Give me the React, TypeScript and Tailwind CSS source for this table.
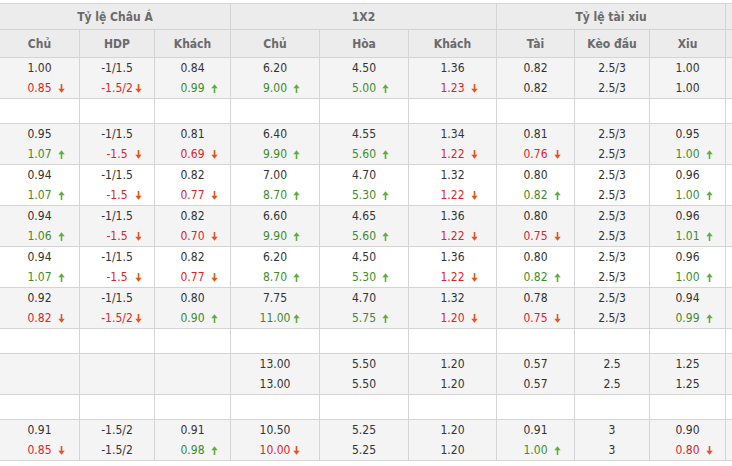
import React from "react";

type Cell = { v: string; d?: "up" | "down" } | null;
type Row = { blank?: boolean; gray?: boolean; cells?: [Cell, Cell][] };

const COLS = "grid grid-cols-[80px_75px_76px_89px_89px_88px_78px_75px_76px_1fr]";

function Arrow({ d }: { d: "up" | "down" }) {
  const color = d === "up" ? "#5eae3e" : "#e5531f";
  return (
    <svg width="7" height="9" viewBox="0 0 7 9" className={d === "down" ? "rotate-180" : ""}>
      <path d="M3.5 9V3" stroke={color} strokeWidth="1.6" />
      <polygon points="0.3,4.2 3.5,0.3 6.7,4.2" fill={color} />
    </svg>
  );
}

function Line({ c }: { c: Cell }) {
  if (!c) return <div className="h-5" />;
  const tone = c.d === "up" ? "text-[#3f8b2c]" : c.d === "down" ? "text-[#d8272c]" : "text-[#333]";
  return (
    <div className={`relative h-5 leading-5 w-full text-center ${tone}`}>
      {c.v}
      {c.d && (
        <span className="absolute left-[calc(50%+18px)] top-[6px] flex">
          <Arrow d={c.d} />
        </span>
      )}
    </div>
  );
}

const n = (v: string, d?: "up" | "down"): Cell => ({ v, d });

const rows: Row[] = [
  {
    gray: true,
    cells: [
      [n("1.00"), n("0.85", "down")],
      [n("-1/1.5"), n("-1.5/2", "down")],
      [n("0.84"), n("0.99", "up")],
      [n("6.20"), n("9.00", "up")],
      [n("4.50"), n("5.00", "up")],
      [n("1.36"), n("1.23", "down")],
      [n("0.82"), n("0.82")],
      [n("2.5/3"), n("2.5/3")],
      [n("1.00"), n("1.00")],
    ],
  },
  { blank: true },
  {
    gray: true,
    cells: [
      [n("0.95"), n("1.07", "up")],
      [n("-1/1.5"), n("-1.5", "down")],
      [n("0.81"), n("0.69", "down")],
      [n("6.40"), n("9.90", "up")],
      [n("4.55"), n("5.60", "up")],
      [n("1.34"), n("1.22", "down")],
      [n("0.81"), n("0.76", "down")],
      [n("2.5/3"), n("2.5/3")],
      [n("0.95"), n("1.00", "up")],
    ],
  },
  {
    cells: [
      [n("0.94"), n("1.07", "up")],
      [n("-1/1.5"), n("-1.5", "down")],
      [n("0.82"), n("0.77", "down")],
      [n("7.00"), n("8.70", "up")],
      [n("4.70"), n("5.30", "up")],
      [n("1.32"), n("1.22", "down")],
      [n("0.80"), n("0.82", "up")],
      [n("2.5/3"), n("2.5/3")],
      [n("0.96"), n("1.00", "up")],
    ],
  },
  {
    gray: true,
    cells: [
      [n("0.94"), n("1.06", "up")],
      [n("-1/1.5"), n("-1.5", "down")],
      [n("0.82"), n("0.70", "down")],
      [n("6.60"), n("9.90", "up")],
      [n("4.65"), n("5.60", "up")],
      [n("1.36"), n("1.22", "down")],
      [n("0.80"), n("0.75", "down")],
      [n("2.5/3"), n("2.5/3")],
      [n("0.96"), n("1.01", "up")],
    ],
  },
  {
    cells: [
      [n("0.94"), n("1.07", "up")],
      [n("-1/1.5"), n("-1.5", "down")],
      [n("0.82"), n("0.77", "down")],
      [n("6.20"), n("8.70", "up")],
      [n("4.50"), n("5.30", "up")],
      [n("1.36"), n("1.22", "down")],
      [n("0.80"), n("0.82", "up")],
      [n("2.5/3"), n("2.5/3")],
      [n("0.96"), n("1.00", "up")],
    ],
  },
  {
    gray: true,
    cells: [
      [n("0.92"), n("0.82", "down")],
      [n("-1/1.5"), n("-1.5/2", "down")],
      [n("0.80"), n("0.90", "up")],
      [n("7.75"), n("11.00", "up")],
      [n("4.70"), n("5.75", "up")],
      [n("1.32"), n("1.20", "down")],
      [n("0.78"), n("0.75", "down")],
      [n("2.5/3"), n("2.5/3")],
      [n("0.94"), n("0.99", "up")],
    ],
  },
  { blank: true },
  {
    gray: true,
    cells: [
      [null, null],
      [null, null],
      [null, null],
      [n("13.00"), n("13.00")],
      [n("5.50"), n("5.50")],
      [n("1.20"), n("1.20")],
      [n("0.57"), n("0.57")],
      [n("2.5"), n("2.5")],
      [n("1.25"), n("1.25")],
    ],
  },
  { blank: true },
  {
    gray: true,
    cells: [
      [n("0.91"), n("0.85", "down")],
      [n("-1.5/2"), n("-1.5/2")],
      [n("0.91"), n("0.98", "up")],
      [n("10.50"), n("10.00", "down")],
      [n("5.25"), n("5.25")],
      [n("1.20"), n("1.20")],
      [n("0.91"), n("1.00", "up")],
      [n("3"), n("3")],
      [n("0.90"), n("0.80", "down")],
    ],
  },
];

const subHeads = ["Chủ", "HDP", "Khách", "Chủ", "Hòa", "Khách", "Tài", "Kèo đầu", "Xiu"];

export default function App() {
  return (
    <div className="w-[732px] h-[466px] overflow-hidden bg-white pt-[3px] text-[12px] font-['DejaVu_Sans_Condensed','DejaVu_Sans',sans-serif]">
      <div className="border-t border-[#d4d4d4]">
        {/* top header */}
        <div className={`${COLS} h-[26px] bg-[#ececec] border-b border-[#d4d4d4] font-bold text-[#6a6a6a]`}>
          <div className="col-span-3 border-r border-[#d4d4d4] flex items-center justify-center">Tỷ lệ Châu Á</div>
          <div className="col-span-3 border-r border-[#d4d4d4] flex items-center justify-center">1X2</div>
          <div className="col-span-3 border-r border-[#d4d4d4] flex items-center justify-center">Tỷ lệ tài xiu</div>
          <div />
        </div>
        <div className={`${COLS} h-[28px] bg-[#ececec] border-b border-[#d4d4d4] font-bold text-[#6a6a6a]`}>
          {subHeads.map((h, i) => (
            <div key={i} className="border-r border-[#d4d4d4] flex items-center justify-center">
              {h}
            </div>
          ))}
          <div />
        </div>

        {rows.map((r, ri) =>
          r.blank ? (
            <div key={ri} className={`${COLS} h-[25px] bg-white border-b border-[#d4d4d4]`}>
              {subHeads.map((_, i) => (
                <div key={i} className="border-r border-[#d4d4d4]" />
              ))}
              <div />
            </div>
          ) : (
            <div
              key={ri}
              className={`${COLS} h-[41px] border-b border-[#d4d4d4] ${r.gray ? "bg-[#f4f4f4]" : "bg-white"}`}
            >
              {r.cells!.map((pair, i) => (
                <div key={i} className="border-r border-[#d4d4d4] flex flex-col justify-center">
                  <Line c={pair[0]} />
                  <Line c={pair[1]} />
                </div>
              ))}
              <div />
            </div>
          )
        )}
      </div>
    </div>
  );
}
